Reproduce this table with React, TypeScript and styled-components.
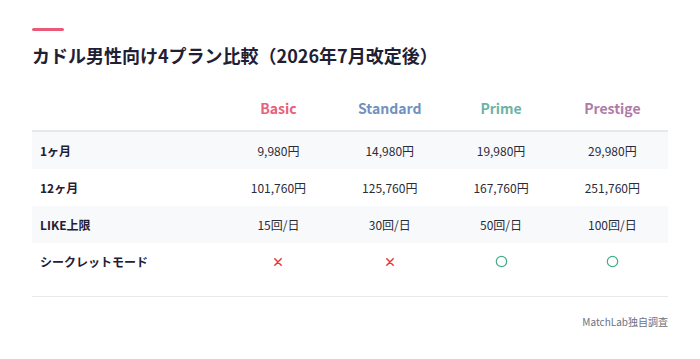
import styled, { createGlobalStyle } from "styled-components";

const GlobalStyle = createGlobalStyle`
  body {
    margin: 0;
    background: #ffffff;
    font-family: "Noto Sans CJK JP", "Noto Sans", sans-serif;
    color: #1f2033;
  }
`;

type Plan = { name: string; color: string };

const plans: Plan[] = [
  { name: "Basic", color: "#e8607a" },
  { name: "Standard", color: "#7091c0" },
  { name: "Prime", color: "#6db3a4" },
  { name: "Prestige", color: "#b07aa6" },
];

type Mark = "no" | "yes";

const rows: { label: string; values: (string | Mark)[] }[] = [
  { label: "1ヶ月", values: ["9,980円", "14,980円", "19,980円", "29,980円"] },
  { label: "12ヶ月", values: ["101,760円", "125,760円", "167,760円", "251,760円"] },
  { label: "LIKE上限", values: ["15回/日", "30回/日", "50回/日", "100回/日"] },
  { label: "シークレットモード", values: ["no", "no", "yes", "yes"] },
];

const CrossIcon = () => (
  <svg width="10" height="10" viewBox="0 0 10 10">
    <path d="M1.8 1.8 L8.2 8.2 M8.2 1.8 L1.8 8.2" stroke="#e53935" strokeWidth="1.5" strokeLinecap="round" />
  </svg>
);

const CircleIcon = () => (
  <svg width="13" height="13" viewBox="0 0 13 13">
    <circle cx="6.5" cy="6.5" r="5.2" fill="none" stroke="#3fae86" strokeWidth="1.2" />
  </svg>
);

const App = () => {
  return (
    <>
      <GlobalStyle />
      <StyledPage>
        <StyledAccent />
        <StyledTitle>カドル男性向け4プラン比較（2026年7月改定後）</StyledTitle>
        <StyledTableWrap>
          <StyledTable>
            <colgroup>
              <col style={{ width: "30%" }} />
              {plans.map((p) => (
                <col key={p.name} style={{ width: "17.5%" }} />
              ))}
            </colgroup>
            <thead>
              <tr>
                <StyledHeadCell />
                {plans.map((p) => (
                  <StyledHeadCell key={p.name} $color={p.color}>
                    {p.name}
                  </StyledHeadCell>
                ))}
              </tr>
            </thead>
            <tbody>
              {rows.map((row, i) => (
                <StyledRow key={row.label} $striped={i % 2 === 0}>
                  <StyledLabelCell>{row.label}</StyledLabelCell>
                  {row.values.map((v, j) => (
                    <StyledValueCell key={j}>
                      {v === "no" ? <CrossIcon /> : v === "yes" ? <CircleIcon /> : v}
                    </StyledValueCell>
                  ))}
                </StyledRow>
              ))}
            </tbody>
          </StyledTable>
        </StyledTableWrap>
        <StyledSource>MatchLab独自調査</StyledSource>
      </StyledPage>
    </>
  );
};

export default App;

const StyledPage = styled.div`
  padding: 28px 32px 20px;
`;

const StyledAccent = styled.div`
  width: 32px;
  height: 3px;
  border-radius: 2px;
  background: #ea5a78;
`;

const StyledTitle = styled.h2`
  margin: 12px 0 0;
  font-size: 18px;
  line-height: 25px;
  font-weight: 700;
  color: #1f2033;
  letter-spacing: 0;
`;

const StyledTableWrap = styled.div`
  margin-top: 18px;
  padding-bottom: 16px;
  border-bottom: 1px solid #e6e8ec;
`;

const StyledTable = styled.table`
  width: 100%;
  border-collapse: collapse;
  table-layout: fixed;
`;

const StyledHeadCell = styled.th<{ $color?: string }>`
  padding: 12px 8px;
  font-size: 14px;
  line-height: 20px;
  font-weight: 700;
  text-align: center;
  color: ${(p) => p.$color || "#1f2033"};
  border-bottom: 2px solid #e6e8ec;
`;

const StyledRow = styled.tr<{ $striped: boolean }>`
  background: ${(p) => (p.$striped ? "#f8f9fb" : "#ffffff")};
`;

const StyledLabelCell = styled.td`
  padding: 8px 8px;
  height: 21px;
  font-size: 12px;
  line-height: 21px;
  font-weight: 700;
  color: #1f2033;
  text-align: left;
`;

const StyledValueCell = styled.td`
  padding: 8px 8px;
  height: 21px;
  font-size: 12px;
  line-height: 21px;
  color: #2a2c3a;
  text-align: center;
  vertical-align: middle;

  svg {
    display: block;
    margin: 0 auto;
  }
`;

const StyledSource = styled.div`
  margin-top: 17px;
  text-align: right;
  font-size: 10px;
  line-height: 16px;
  color: #6b7280;
`;
